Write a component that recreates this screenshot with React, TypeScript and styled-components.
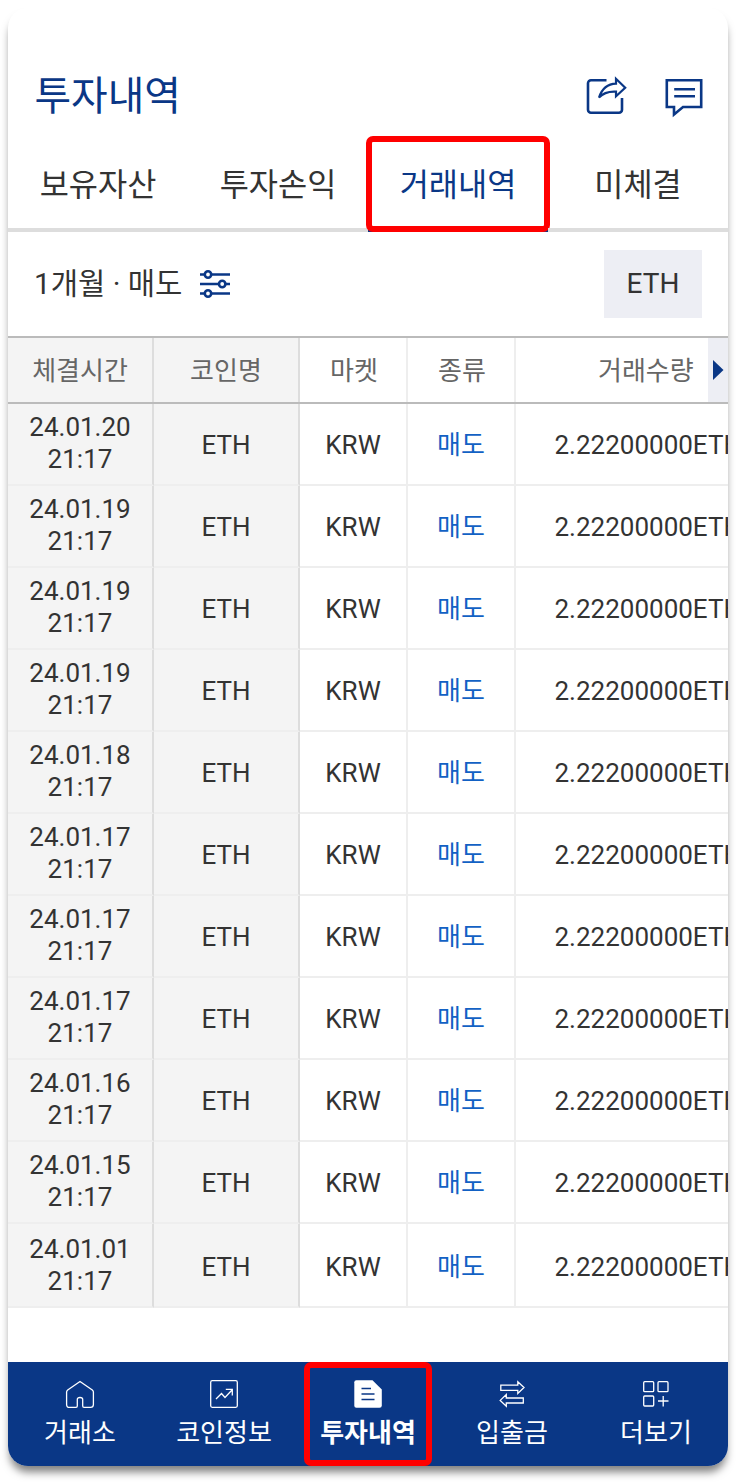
import React from "react";
import styled, { createGlobalStyle } from "styled-components";

const navy = "#0a3786";
const fonts = `Roboto, "Noto Sans CJK KR", sans-serif`;

const GlobalStyle = createGlobalStyle`
  *, *::before, *::after { box-sizing: border-box; }
  body { margin: 0; background: #fff; font-family: ${fonts}; color: #333; }
`;

const Page = styled.div`
  padding: 8px 8px 16px;
  height: 1482px;
  overflow: hidden;
`;

const Phone = styled.main`
  width: 720px;
  height: 1458px;
  display: flex;
  flex-direction: column;
  background: #fff;
  border-radius: 20px;
  box-shadow: 0 8px 8px -2px rgba(0, 0, 0, 0.5);
`;

const Header = styled.header`
  display: flex;
  align-items: center;
  justify-content: space-between;
  height: 132px;
  padding: 46px 25.500px 0 26.500px;
`;

const Title = styled.h1`
  margin: 0;
  font-size: 39.8px;
  font-weight: 400;
  line-height: 48px;
  color: ${navy};
`;

const HeaderIcons = styled.div`
  display: flex;
  align-items: center;
  gap: 38px;
  color: ${navy};
  svg { display: block; }
`;

const Tabs = styled.nav`
  display: grid;
  grid-template-columns: repeat(4, 180px);
  height: 92px;
`;

const Tab = styled.div<{ $active?: boolean }>`
  position: relative;
  display: flex;
  align-items: center;
  justify-content: center;
  padding-top: 4px;
  border-bottom: 4px solid ${(p) => (p.$active ? navy : "#ddd")};
  font-size: 31.7px;
  line-height: 40px;
  color: ${(p) => (p.$active ? navy : "#333")};
`;

const Highlight = styled.span<{ $top: number; $side: number; $bottom: number }>`
  position: absolute;
  top: ${(p) => p.$top}px;
  left: ${(p) => p.$side}px;
  right: ${(p) => p.$side}px;
  bottom: ${(p) => p.$bottom}px;
  border: 6px solid #f00;
  border-radius: 7px;
`;

const FilterBar = styled.section`
  display: flex;
  align-items: center;
  justify-content: space-between;
  height: 104px;
  padding: 0 26px;
`;

const Filter = styled.div`
  display: flex;
  align-items: center;
  gap: 17px;
  font-size: 29.7px;
  line-height: 40px;
  color: #333;
  svg { display: block; }
`;

const CoinButton = styled.button`
  width: 98px;
  height: 68px;
  padding: 0;
  border: 0;
  background: #edeef4;
  font: 400 28px/68px ${fonts};
  color: #333;
`;

const Table = styled.section`
  width: 720px;
  overflow: hidden;
`;

const columns = "146px 146px 108px 108px 250px";

const HeadRow = styled.div`
  position: relative;
  display: grid;
  grid-template-columns: ${columns};
  height: 68px;
  border-top: 2px solid #bbb;
  border-bottom: 2px solid #bbb;
  color: #666;
`;

const Row = styled.div<{ $last?: boolean }>`
  display: grid;
  grid-template-columns: ${columns};
  height: ${(p) => (p.$last ? 84 : 82)}px;
`;

const Cell = styled.div<{ $fixed?: boolean; $head?: boolean; $end?: boolean; $date?: boolean; $drop?: number }>`
  display: flex;
  align-items: center;
  justify-content: ${(p) => (p.$end ? "flex-start" : "center")};
  padding-top: ${(p) => (p.$date ? 0 : p.$drop ?? 2)}px;
  padding-bottom: ${(p) => (p.$date && p.$drop !== 4 ? 2 : 0)}px;
  padding-left: ${(p) => (p.$end ? (p.$head ? 82 : 38.5) : !p.$fixed && p.$head ? 2 : 0)}px;
  border-right: 2px solid ${(p) => (p.$fixed ? "#ddd" : "#eee")};
  border-bottom: ${(p) => (p.$head ? "0" : "2px solid #eee")};
  background: ${(p) => (p.$fixed ? "#f4f4f4" : "#fff")};
  font-size: 26px;
  line-height: 32px;
  text-align: center;
  white-space: nowrap;
`;

const Sell = styled.span`
  color: #1261c4;
`;

const ScrollHint = styled.div`
  position: absolute;
  top: 0;
  left: 700px;
  width: 20px;
  height: 64px;
  display: flex;
  align-items: center;
  padding-left: 5px;
  background: #edeef4;
  svg { display: block; }
`;

const BottomNav = styled.nav`
  display: grid;
  grid-template-columns: repeat(5, 144px);
  height: 104px;
  margin-top: auto;
  background: ${navy};
  border-radius: 0 0 20px 20px;
`;

const NavItem = styled.div<{ $active?: boolean }>`
  position: relative;
  display: flex;
  flex-direction: column;
  align-items: center;
  padding-top: 16px;
  font-size: 26px;
  font-weight: ${(p) => (p.$active ? 700 : 400)};
  line-height: 40px;
  color: #fff;
  svg { display: block; margin-bottom: 3px; }
`;

const ShareIcon = () => (
  <svg width="42" height="42" viewBox="0 0 42 42" fill="none" stroke="currentColor" strokeWidth="2.6">
    <path d="M21.500 4.300H6a3 3 0 0 0-3 3V33.700a3 3 0 0 0 3 3H34a3 3 0 0 0 3-3V22" />
    <path d="M14 21.500C17 12.500 22.500 7.800 31 7.600V2.800L40.200 11.700 31 20.200V15.600C24 15.200 18.500 16.500 14 21.500Z" strokeWidth="2.200" />
  </svg>
);

const MessageIcon = () => (
  <svg width="38" height="42" viewBox="0 0 38 42" fill="none" stroke="currentColor" strokeWidth="2.6">
    <path d="M1.800 4.300H36.200V31H18L9 38.400V31H1.800Z" />
    <path d="M9.200 13.200H30M9.200 20.300H30" />
  </svg>
);

const FilterIcon = () => (
  <svg width="32" height="30" viewBox="0 0 32 30" fill="#fff" stroke={navy} strokeWidth="2.600">
    <path d="M1 5.500H31M1 15H31M1 24.500H31" />
    <circle cx="9" cy="5.500" r="3.200" />
    <circle cx="23.200" cy="15" r="3.200" />
    <circle cx="9" cy="24.500" r="3.200" />
  </svg>
);

const line = { width: 32, height: 32, viewBox: "0 0 32 32", fill: "none", stroke: "#fff", strokeWidth: 1.3 };

const HomeIcon = () => (
  <svg {...line}>
    <path d="M16 3.500L28.300 12Q29.400 13 29.400 14V26.500Q29.400 29.400 26.500 29.400H20Q18.700 29.400 18.700 28V21.500Q18.700 19.500 16 19.500T13.300 21.500V28Q13.300 29.400 12 29.400H5.500Q2.600 29.400 2.600 26.500V14Q2.600 13 3.700 12Z" />
  </svg>
);

const ChartIcon = () => (
  <svg {...line}>
    <rect x="2.700" y="2.700" width="26.600" height="26.600" rx="1.500" />
    <path d="M8 21L13.500 15.500 17 19.500 24 12M17.800 11.300H24.300V17.500" />
  </svg>
);

const DocumentIcon = () => (
  <svg width="32" height="32" viewBox="0 0 32 32" fill="none">
    <path d="M4.300 2.200H20.500L29.800 11.500V27.500Q29.800 29.800 27.500 29.800H4.300Q2.300 29.800 2.300 27.800V4.200Q2.300 2.200 4.300 2.200Z" fill="#fff" />
    <path d="M9.500 10.500H19M9.500 16H22.500M9.500 21.500H22.500" stroke={navy} strokeWidth="1.300" />
  </svg>
);

const TransferIcon = () => (
  <svg {...line}>
    <path d="M4.800 7.200H21.800V3.700L28 9.500 21.800 15.400V12.400H4.800ZM27.300 20H10.300V16.600L4.200 22.400 10.300 28.200V25H27.300Z" />
  </svg>
);

const MoreIcon = () => (
  <svg {...line}>
    <rect x="3.700" y="3.700" width="10" height="10" rx="1" />
    <rect x="18" y="3.700" width="10" height="10" rx="1" />
    <rect x="3.700" y="18" width="10" height="10" rx="1" />
    <path d="M18 23H28.500M23.200 18V28.500" />
  </svg>
);

const dates = [
  "24.01.20", "24.01.19", "24.01.19", "24.01.19", "24.01.18", "24.01.17",
  "24.01.17", "24.01.17", "24.01.16", "24.01.15", "24.01.01",
];

const navItems = [
  { label: "거래소", Icon: HomeIcon },
  { label: "코인정보", Icon: ChartIcon },
  { label: "투자내역", Icon: DocumentIcon, active: true },
  { label: "입출금", Icon: TransferIcon },
  { label: "더보기", Icon: MoreIcon },
];

export default function App() {
  return (
    <Page lang="ko">
      <GlobalStyle />
      <Phone>
        <Header>
          <Title>투자내역</Title>
          <HeaderIcons>
            <ShareIcon />
            <MessageIcon />
          </HeaderIcons>
        </Header>
        <Tabs>
          <Tab>보유자산</Tab>
          <Tab>투자손익</Tab>
          <Tab $active>
            거래내역
            <Highlight $top={-4} $side={-2} $bottom={-4} />
          </Tab>
          <Tab>미체결</Tab>
        </Tabs>
        <FilterBar>
          <Filter>
            <span>1개월 · 매도</span>
            <FilterIcon />
          </Filter>
          <CoinButton>ETH</CoinButton>
        </FilterBar>
        <Table>
          <HeadRow>
            <Cell $fixed $head>체결시간</Cell>
            <Cell $fixed $head>코인명</Cell>
            <Cell $head>마켓</Cell>
            <Cell $head>종류</Cell>
            <Cell $head $end>거래수량</Cell>
            <ScrollHint>
              <svg width="11" height="20" viewBox="0 0 11 20">
                <path d="M0 0L10.500 10 0 20Z" fill={navy} />
              </svg>
            </ScrollHint>
          </HeadRow>
          {dates.map((date, i) => {
            const last = i === dates.length - 1;
            const drop = last ? 4 : 2;
            return (
              <Row key={i} $last={last}>
                <Cell $fixed $date $drop={drop}>
                  {date}
                  <br />
                  21:17
                </Cell>
                <Cell $fixed $drop={drop}>ETH</Cell>
                <Cell $drop={drop}>KRW</Cell>
                <Cell $drop={drop}><Sell>매도</Sell></Cell>
                <Cell $end $drop={drop}>2.22200000ETH</Cell>
              </Row>
            );
          })}
        </Table>
        <BottomNav>
          {navItems.map(({ label, Icon, active }) => (
            <NavItem key={label} $active={active}>
              <Icon />
              {label}
              {active && <Highlight $top={0} $side={8} $bottom={0} />}
            </NavItem>
          ))}
        </BottomNav>
      </Phone>
    </Page>
  );
}
